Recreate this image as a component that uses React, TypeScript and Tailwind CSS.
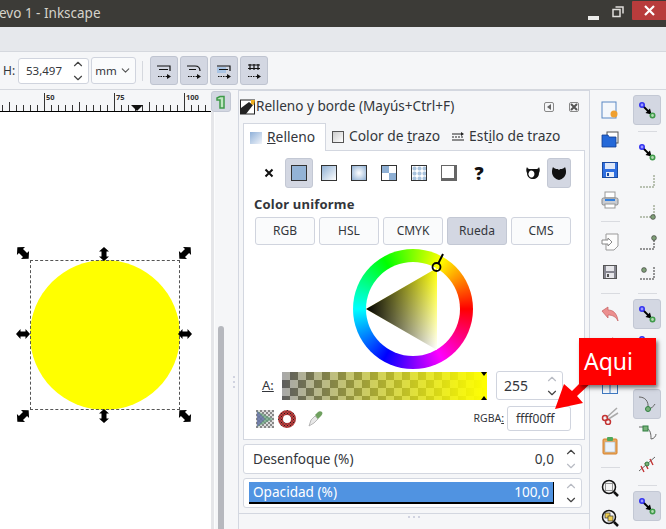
import { ChevronDown, ChevronUp } from "lucide-react";
import React from "react";

const NodeIcon = () => (
  <svg width="24" height="24" viewBox="0 0 24 24">
    <path d="M8 8L14 14" stroke="#000" strokeWidth="1.800" />
    <path d="M16.500 16.500L10.500 15L15 10.500Z" fill="#000" />
    <circle cx="7" cy="7" r="2.200" fill="#9a9aff" stroke="#3232f0" strokeWidth="1.600" />
    <circle cx="17.500" cy="17.500" r="2.200" fill="#b5dcb5" stroke="#3f9a4a" strokeWidth="1.600" />
  </svg>
);

const Handle = ({ dir, x, y, size = 14 }: { dir: number; x: number; y: number; size?: number }) => (
  <svg
    width={size}
    height={size}
    viewBox="-7 -7 14 14"
    className="absolute overflow-visible"
    style={{ left: x - size / 2, top: y - size / 2, transform: `rotate(${dir}deg)` }}
  >
    <path
      d="M0 -7 L5 -2.500 L2.500 -2.500 L2.500 2.500 L5 2.500 L0 7 L-5 2.500 L-2.500 2.500 L-2.500 -2.500 L-5 -2.500 Z"
      fill="#000"
    />
  </svg>
);

const Spin = ({ dimUp, dimDown }: { dimUp?: boolean; dimDown?: boolean }) => (
  <div className="flex flex-col items-center">
    <ChevronUp size={14} className={dimUp ? "text-[#b9bcc4]" : "text-[#444]"} />
    <ChevronDown size={14} className={dimDown ? "text-[#b9bcc4]" : "text-[#444]"} />
  </div>
);

const ToolBtn = ({ d, extra }: { d: string; extra?: React.ReactNode }) => (
  <div className="w-[28px] h-[29px] rounded-[3px] border border-[#bfc4d0] bg-[#d3d7e2] flex items-center justify-center">
    <svg width="16" height="16" viewBox="0 0 16 16">
      {extra}
      <path d={d} stroke="#111" strokeWidth="1.200" fill="none" />
      <path d="M2 13.500h9" stroke="#111" strokeWidth="1.200" strokeDasharray="1.500 1" />
      <path d="M11 11l4 2.500-4 2.500z" fill="#111" />
    </svg>
  </div>
);

const Swatch = ({ className, children }: { className: string; children?: React.ReactNode }) => (
  <div className="w-[30px] flex justify-center">
    <div className={`w-[16px] h-[16px] border border-[#333] ${className}`}>{children}</div>
  </div>
);

const ModeTab = ({ label, on }: { label: string; on?: boolean }) => (
  <div
    className={`w-[60px] h-[28px] rounded-[3px] border flex items-center justify-center text-[12px] ${
      on ? "bg-[#d3d7e2] border-[#c3c8d4]" : "bg-[#fafbfc] border-[#d0d4de]"
    }`}
  >
    {label}
  </div>
);

const Cell = ({ on, children }: { on?: boolean; children?: React.ReactNode }) => (
  <div
    className={`w-[28px] h-[30px] shrink-0 flex items-center justify-center rounded-[3px] ${
      on ? "bg-[#d3d7e2] border border-[#c3c8d4]" : ""
    }`}
  >
    {children}
  </div>
);

const Sep = () => (
  <div className="h-[12px] w-[19px] flex items-center shrink-0">
    <div className="h-px w-full bg-[#d9dbe0]" />
  </div>
);

const Guide = ({ d, dot, color = "#333" }: { d: string; dot?: [number, number]; color?: string }) => (
  <svg width="20" height="20" viewBox="0 0 20 20">
    <path d={d} stroke={color} strokeWidth="1" strokeDasharray="2 1" fill="none" />
    {dot && <circle cx={dot[0]} cy={dot[1]} r="2.400" fill="#7f9f78" stroke="#333" strokeWidth="0.600" />}
  </svg>
);

export default function App() {
  const ticks = Array.from({ length: 31 }, (_, i) => i * 7 + 2.5);

  return (
    <div className="relative w-[666px] h-[529px] overflow-hidden bg-[#f5f6f8] text-[#33363b] font-['Noto_Sans','Open_Sans',sans-serif]">
      {/* title bar */}
      <div className="h-[27px] bg-[#3c3b37] flex items-center justify-between">
        <div className="ml-[-1px] text-[13.500px] text-[#d6d3cb]">evo 1 - Inkscape</div>
        <div className="flex items-center h-full">
          <div className="w-[11px] h-[4px] bg-[#ececea] mt-[8px] mr-[13px]" />
          <svg width="12" height="12" viewBox="0 0 12 12" className="mr-[8px] mb-[3px]">
            <path d="M3.500 1h7.500v6.500" fill="none" stroke="#dfdedb" strokeWidth="1.500" />
            <rect x="1" y="3.500" width="7" height="7" fill="none" stroke="#dfdedb" strokeWidth="1.500" />
          </svg>
          <div className="w-[35px] h-[19px] mb-[6px] bg-[#b83c3c] flex items-center justify-center mr-[-1px] rounded-[1px]">
            <svg width="11" height="11" viewBox="0 0 11 11">
              <path d="M1 1l9 9M10 1l-9 9" stroke="#fff" strokeWidth="2.200" />
            </svg>
          </div>
        </div>
      </div>

      {/* menu bar */}
      <div className="h-[25px] bg-[#e6e8ec] border-b border-[#d5d8de]" />

      {/* controls bar */}
      <div className="h-[38px] flex items-center pl-[3px] border-b border-[#d5d8de]">
        <span className="text-[12px] w-[15px]">H:</span>
        <div className="w-[71px] h-[26px] rounded-[3px] border border-[#d0d4de] bg-white flex items-center justify-between pl-[7px] pr-[3px] text-[11.500px]">
          53,497
          <Spin />
        </div>
        <div className="ml-[2px] w-[45px] h-[27px] rounded-[3px] border border-[#d0d4de] bg-[#fafbfc] flex items-center justify-center gap-[2px] text-[11.500px]">
          mm
          <ChevronDown size={13} className="text-[#555]" />
        </div>
        <div className="w-px h-[20px] bg-[#d5d8de] ml-[6px] mr-[7px]" />
        <div className="flex gap-[2px]">
          <ToolBtn d="M1 3h13v5M3 6.500h9" />
          <ToolBtn d="M1 3h8c3 0 5 2 5 5M3 6.500h7" />
          <ToolBtn d="M1 3h13v5M3 6.500h9" extra={<rect x="1" y="4" width="9" height="6" fill="#a9c4e4" />} />
          <ToolBtn d="M2 2h12M2 5.500h12M4 1v6M8 1v6M12 1v6" />
        </div>
      </div>

      <div className="h-[440px] flex">
        {/* canvas column */}
        <div className="w-[211px] shrink-0 flex flex-col bg-white">
          <div className="relative h-[22px] bg-[#f5f6f8] border-b border-black">
            <svg width="211" height="21" className="absolute left-0 top-0">
              {ticks.map((x, i) => (
                <path
                  key={i}
                  d={`M${x} 21V${(i + 4) % 10 === 0 ? 3 : (i + 4) % 5 === 0 ? 12 : 15}`}
                  stroke="#333"
                  strokeWidth="1"
                />
              ))}
              <path d="M131 15h12l-6 6z" fill="#111" />
            </svg>
            <span className="absolute left-[46px] top-[2px] text-[7.500px] font-bold text-[#333]">50</span>
            <span className="absolute left-[116px] top-[2px] text-[7.500px] font-bold text-[#333]">75</span>
            <span className="absolute left-[186px] top-[2px] text-[7.500px] font-bold text-[#333]">100</span>
          </div>
          <div className="relative flex-1">
            <div className="absolute left-[30px] top-[148px] w-[150px] h-[150px] rounded-full bg-[#ffff00]" />
            <div className="absolute left-[30px] top-[148px] w-[150px] h-[150px] border border-dashed border-[#555]" />
            <Handle dir={0} x={104} y={141.5} />
            <Handle dir={0} x={104} y={303.5} />
            <Handle dir={90} x={23} y={222} />
            <Handle dir={90} x={185} y={222} />
            <Handle dir={-45} x={23} y={141} size={16} />
            <Handle dir={45} x={185} y={141} size={16} />
            <Handle dir={45} x={23} y={303.5} size={16} />
            <Handle dir={-45} x={185} y={303.5} size={16} />
          </div>
        </div>

        {/* scrollbar column */}
        <div className="w-[27px] shrink-0 flex flex-col">
          <div className="h-[22px] flex items-start">
            <div className="w-[20px] h-[21px] rounded-[3px] bg-[#d3d7e2] border border-[#c3c8d4] flex items-center justify-center mt-[1px]">
              <svg width="12" height="14" viewBox="0 0 12 14">
                <path d="M2 3l3-1.500h4V13H5V5H2z" fill="#bfe6c0" stroke="#3f9a4a" strokeWidth="1.500" />
              </svg>
            </div>
          </div>
          <div className="flex-1 flex">
            <div className="w-[3px] bg-[#e5e6e9]" />
            <div className="relative flex-1 border-l border-[#fbfcfd]">
              <div className="absolute left-[3px] top-[214px] bottom-[0] w-[6px] rounded-t-[3px] bg-[#b6b8be]" />
              <div className="absolute left-[18px] top-[264px] flex flex-col gap-[3px]">
                <div className="w-[2px] h-[2px] bg-[#d0d3e0]" />
                <div className="w-[2px] h-[2px] bg-[#d0d3e0]" />
                <div className="w-[2px] h-[2px] bg-[#d0d3e0]" />
              </div>
            </div>
          </div>
        </div>

        {/* fill and stroke dock */}
        <div className="w-[352px] shrink-0 border-l border-t border-r border-[#d3d7e0] flex flex-col">
          <div className="h-[31px] shrink-0 flex items-center pl-[1px] pr-[10px]">
            <svg width="16" height="16" viewBox="0 0 16 16" className="shrink-0">
              <rect x="0.500" y="1" width="14" height="14" fill="#fff" stroke="#222" />
              <path d="M1 15L1 9 9 3l4 3-7 9z" fill="#222" />
              <path d="M11 1l4 0-1 5-3-1z" fill="#f0b020" />
            </svg>
            <span className="text-[13.600px] whitespace-nowrap">Relleno y borde (Mayús+Ctrl+F)</span>
            <div className="ml-auto flex gap-[15px]">
              <div className="w-[10px] h-[10px] border border-[#888] rounded-[2px] flex items-center justify-center">
                <div className="w-0 h-0 border-y-[3px] border-y-transparent border-r-[4px] border-r-[#666]" />
              </div>
              <div className="w-[10px] h-[10px] border border-[#888] rounded-[2px] flex items-center justify-center text-[#555]">
                <svg width="8" height="8" viewBox="0 0 8 8">
                  <path d="M1 1l6 6M7 1l-6 6" stroke="#555" strokeWidth="2" />
                </svg>
              </div>
            </div>
          </div>

          {/* notebook */}
          <div className="ml-[4px] mr-[4px] flex flex-col">
            <div className="h-[28px] shrink-0 flex items-end text-[13.800px]">
              <div className="w-[83px] h-[28px] bg-white border border-b-0 border-[#d3d7e0] flex items-center pl-[6px] gap-[5px] relative top-px z-10">
                <div className="w-[12px] h-[12px] bg-[linear-gradient(135deg,#8fb0d8,#f2f5fa)]" />
                <span>
                  <span className="underline">R</span>elleno
                </span>
              </div>
              <div className="flex items-center h-[27px] pl-[6px] gap-[5px]">
                <div className="w-[12px] h-[12px] border border-[#555] bg-[linear-gradient(135deg,#ccc,#fff)]" />
                <span>
                  Color de <span className="underline">t</span>razo
                </span>
              </div>
              <div className="flex items-center h-[27px] pl-[12px] gap-[5px]">
                <svg width="12" height="12" viewBox="0 0 12 12">
                  <path d="M0 3h9M0 9h12" stroke="#222" />
                  <path d="M0 6h12" stroke="#222" strokeDasharray="2 1" />
                  <path d="M9 1l3 2-3 2z" fill="#222" />
                </svg>
                <span>
                  Est<span className="underline">i</span>lo de trazo
                </span>
              </div>
            </div>

            <div className="h-[290px] shrink-0 bg-white border border-[#d3d7e0] pl-[10px] pr-[12px] pt-[7px]">
              <div className="flex items-center h-[30px]">
                <div className="w-[30px] flex justify-center">
                  <svg width="10" height="10" viewBox="0 0 10 10">
                    <path d="M1.500 1.500l7 7M8.500 1.500l-7 7" stroke="#111" strokeWidth="2" />
                  </svg>
                </div>
                <div className="w-[30px] h-[30px] flex items-center justify-center">
                  <div className="w-[28px] h-[30px] flex items-center justify-center rounded-[3px] bg-[#d3d7e2] border border-[#c3c8d4]">
                    <div className="w-[16px] h-[16px] border border-[#333] bg-[#93b3d6]" />
                  </div>
                </div>
                <Swatch className="bg-[linear-gradient(135deg,#8fb0d4,#ffffff)]" />
                <Swatch className="bg-[radial-gradient(circle,#ffffff,#8fb0d4)]" />
                <Swatch className="grid grid-cols-2">
                  <div className="bg-[#8fb0d4]" />
                  <div className="bg-white" />
                  <div className="bg-white" />
                  <div className="bg-[#8fb0d4]" />
                </Swatch>
                <Swatch className="bg-[radial-gradient(circle,#a9c3dd_1.500px,#ffffff_2.500px)] bg-[length:5px_5px]" />
                <Swatch className="bg-white border-[#666] border-r-[3px] border-b-[3px]" />
                <div className="w-[30px] flex justify-center text-[18px] font-black leading-none text-[#111]">?</div>
                <div className="ml-auto flex items-center">
                  <div className="w-[28px] flex justify-center">
                    <svg width="14" height="14" viewBox="0 0 14 14">
                      <path
                        fillRule="evenodd"
                        d="M1 1c1 2 2 2 3 2h6c1 0 2 0 3-2 1 2 1 4 0 6 0 4-3 6-6 6s-6-2-6-6C0 5 0 3 1 1zM7 5a3 3.500 0 100 6 3 3.500 0 000-6z"
                        fill="#111"
                      />
                    </svg>
                  </div>
                  <div className="w-[24px] h-[30px] mr-[1px] rounded-[3px] bg-[#d3d7e2] border border-[#c3c8d4] flex items-center justify-center">
                    <svg width="14" height="14" viewBox="0 0 14 14">
                      <path d="M1 1c1 1.500 3 2 4 2 1 0 1.500.500 2 1 .500-.500 1-1 2-1 1 0 3-.500 4-2 1 2 1 4 1 5 0 4-3 7-7 8-4-1-7-4-7-8 0-1 0-3 1-5z" fill="#111" />
                    </svg>
                  </div>
                </div>
              </div>

              <div className="mt-[7px] text-[13px] font-bold leading-[18px] tracking-[0.2px]">Color uniforme</div>
              <div className="mt-[4px] ml-px flex gap-[4px]">
                <ModeTab label="RGB" />
                <ModeTab label="HSL" />
                <ModeTab label="CMYK" />
                <ModeTab label="Rueda" on />
                <ModeTab label="CMS" />
              </div>

              {/* color wheel */}
              <div className="mt-[4px] flex justify-center">
                <div className="relative w-[120px] h-[120px] rounded-full bg-[conic-gradient(from_90deg,#ff0000,#ff00ff,#0000ff,#00ffff,#00ff00,#ffff00,#ff0000)]">
                  <div className="absolute inset-[13px] rounded-full bg-white" />
                  <svg width="120" height="120" viewBox="0 0 120 120" className="absolute left-0 top-0">
                    <defs>
                      <linearGradient id="hueFade" x1="0" y1="0" x2="0" y2="1">
                        <stop offset="0" stopColor="#ffff00" />
                        <stop offset="1" stopColor="#ffffff" />
                      </linearGradient>
                      <linearGradient id="blackFade" x1="0" y1="0" x2="1" y2="0">
                        <stop offset="0" stopColor="#000" stopOpacity="1" />
                        <stop offset="1" stopColor="#000" stopOpacity="0" />
                      </linearGradient>
                    </defs>
                    <path d="M13 60L84 19V101Z" fill="url(#hueFade)" />
                    <path d="M13 60L84 19V101Z" fill="url(#blackFade)" />
                    <circle cx="83.500" cy="18" r="4" fill="none" stroke="#000" strokeWidth="1.800" />
                    <path d="M85 15L90 5" stroke="#000" strokeWidth="2" />
                  </svg>
                </div>
              </div>

              {/* alpha slider */}
              <div className="mt-[2px] flex items-center">
                <span className="w-[20px] ml-[8px] text-[13px] underline decoration-1">A:</span>
                <div className="relative w-[205px] h-[28px] bg-[linear-gradient(90deg,rgba(255,255,0,0),#ffff00),repeating-conic-gradient(#5e5e5e_0_25%,#a8a8a8_0_50%)] [background-size:100%_100%,16px_16px]">
                  <div className="absolute right-0 top-0 w-0 h-0 border-x-[3px] border-x-transparent border-t-[4px] border-t-black" />
                  <div className="absolute right-0 bottom-0 w-0 h-0 border-x-[3px] border-x-transparent border-b-[4px] border-b-black" />
                </div>
                <div className="ml-[9px] w-[67px] h-[29px] rounded-[3px] border border-[#d0d4de] flex items-center justify-between pl-[7px] pr-[3px] text-[14px]">
                  255
                  <Spin dimUp />
                </div>
              </div>

              {/* rgba row */}
              <div className="mt-[6px] flex items-center h-[25px]">
                <svg width="18" height="18" viewBox="0 0 18 18" className="ml-[2px]">
                  <defs>
                    <pattern id="chk" width="4" height="4" patternUnits="userSpaceOnUse">
                      <rect width="4" height="4" fill="#ddd" />
                      <rect width="2" height="2" fill="#888" />
                      <rect x="2" y="2" width="2" height="2" fill="#888" />
                    </pattern>
                    <pattern id="chkRed" width="3" height="3" patternUnits="userSpaceOnUse">
                      <rect width="3" height="3" fill="#c23c3c" />
                      <rect width="1" height="1" fill="#222" />
                      <rect x="1.500" y="1.500" width="1" height="1" fill="#222" />
                    </pattern>
                  </defs>
                  <rect width="18" height="18" fill="url(#chk)" />
                  <path d="M1 1L17 9 1 17z" fill="#5f9e78" opacity="0.7" />
                  <path d="M1 1L9 9 1 17z" fill="#6a62b8" opacity="0.6" />
                </svg>
                <svg width="18" height="18" viewBox="0 0 18 18" className="ml-[4px]">
                  <path
                    fillRule="evenodd"
                    d="M9 0a9 9 0 100 18 9 9 0 000-18zM9 5a4 4 0 110 8 4 4 0 010-8z"
                    fill="url(#chkRed)"
                  />
                </svg>
                <svg width="16" height="17" viewBox="0 0 16 17" className="ml-[12px]">
                  <path d="M1 16l2-6 4-4 3 3-4 4z" fill="#e8e8e8" stroke="#aaa" strokeWidth="0.800" />
                  <path d="M7 5l3-3c1-1 3-1 4 0s0 3-1 4l-3 3z" fill="#6fa05f" />
                </svg>
                <span className="ml-auto text-[10.500px]">
                  RGBA<span className="underline">:</span>
                </span>
                <div className="ml-[3px] mr-[1px] w-[64px] h-[25px] rounded-[3px] border border-[#d0d4de] flex items-center pl-[8px] text-[12px]">
                  ffff00ff
                </div>
              </div>
            </div>

            <div className="mt-[4px] h-[30px] shrink-0 mr-[3px] rounded-[3px] border border-[#d3d7e0] bg-white flex items-center pl-[9px] pr-[3px] text-[13.600px]">
              Desenfoque (%)
              <span className="ml-auto mr-[10px]">0,0</span>
              <Spin dimDown />
            </div>
            <div className="mt-[4px] h-[30px] shrink-0 mr-[3px] rounded-[3px] border border-[#d3d7e0] bg-white flex items-center pl-[5px] pr-[3px] text-[13.600px]">
              <div className="flex-1 h-[22px] bg-[#5093e1] border-b-2 border-r border-black text-white flex items-center justify-between px-[4px]">
                <span>Opacidad (%)</span>
                <span>100,0</span>
              </div>
              <div className="ml-[10px]">
                <Spin dimUp />
              </div>
            </div>
            <div className="h-[5px] shrink-0" />
          </div>
          <div className="h-[1px] bg-[#d3d7e0] shrink-0" />
          <div className="flex justify-center gap-[3px] mt-[2px]">
            <div className="w-[2px] h-[2px] bg-[#d0d3e0]" />
            <div className="w-[2px] h-[2px] bg-[#d0d3e0]" />
            <div className="w-[2px] h-[2px] bg-[#d0d3e0]" />
          </div>
        </div>

        {/* commands bar */}
        <div className="w-[38px] shrink-0 flex flex-col items-center pt-[5px] pl-[2px]">
          <Cell>
            <svg width="18" height="18" viewBox="0 0 18 18">
              <rect x="1" y="1" width="14" height="16" fill="#f4f7fb" stroke="#5a88c4" />
              <circle cx="13" cy="13" r="3.500" fill="#f0a030" />
            </svg>
          </Cell>
          <Cell>
            <svg width="18" height="18" viewBox="0 0 18 18">
              <rect x="6" y="1" width="11" height="11" fill="#fff" stroke="#555" />
              <path d="M1 4h6l1 2h7v10H1z" fill="#2468d8" stroke="#123d90" strokeWidth="0.800" />
            </svg>
          </Cell>
          <Cell>
            <svg width="16" height="16" viewBox="0 0 16 16">
              <rect x="0.500" y="0.500" width="15" height="15" fill="#2f6fe0" stroke="#1b4aa0" />
              <rect x="3" y="1" width="10" height="6" fill="#dfe8f8" />
              <rect x="4" y="10" width="8" height="5" fill="#e8eef8" />
              <rect x="5" y="11" width="2" height="3" fill="#1b4aa0" />
            </svg>
          </Cell>
          <Cell>
            <svg width="18" height="18" viewBox="0 0 18 18">
              <rect x="4" y="1" width="10" height="6" fill="#fff" stroke="#999" />
              <rect x="1" y="7" width="16" height="7" rx="1.500" fill="#c9ccd2" stroke="#888" />
              <rect x="4" y="8" width="10" height="2" fill="#2f7fe0" />
              <rect x="4" y="13" width="10" height="4" fill="#fff" stroke="#999" />
            </svg>
          </Cell>
          <Sep />
          <Cell>
            <svg width="18" height="18" viewBox="0 0 18 18">
              <path d="M5 1h12v12l-4 4H5z" fill="#fcfcfc" stroke="#999" />
              <path d="M1 7h6V5l4 4-4 4v-2H1z" fill="#fff" stroke="#888" />
            </svg>
          </Cell>
          <Cell>
            <svg width="14" height="14" viewBox="0 0 14 14">
              <rect x="0.500" y="0.500" width="13" height="13" fill="#85858f" stroke="#555" />
              <rect x="3" y="1" width="8" height="5" fill="#e6e6ea" />
              <rect x="3" y="8" width="8" height="5" fill="#e6e6ea" />
              <rect x="4" y="9" width="2" height="3" fill="#555" />
            </svg>
          </Cell>
          <Sep />
          <Cell>
            <svg width="18" height="16" viewBox="0 0 18 16">
              <path d="M1 5l6-4v3c5 0 9 3 10 11-2-4-5-6-10-6v3z" fill="#ec8f8f" stroke="#c46060" strokeWidth="0.700" />
            </svg>
          </Cell>
          <Cell>
            <svg width="18" height="16" viewBox="0 0 18 16">
              <path d="M17 5l-6-4v3C6 4 2 7 1 15c2-4 5-6 10-6v3z" fill="#ec8f8f" />
            </svg>
          </Cell>
          <Sep />
          <Cell>
            <svg width="16" height="16" viewBox="0 0 16 16">
              <rect x="0.500" y="0.500" width="15" height="15" fill="#f3f7fc" stroke="#3f78c0" />
              <path d="M8 0v16" stroke="#3f78c0" />
            </svg>
          </Cell>
          <Cell>
            <svg width="18" height="18" viewBox="0 0 18 18">
              <path d="M5 11L16 1M6 13L17 6" stroke="#aaa" strokeWidth="1.500" />
              <circle cx="4" cy="11" r="2.500" fill="none" stroke="#c43434" strokeWidth="1.500" />
              <circle cx="7" cy="15" r="2.500" fill="none" stroke="#c43434" strokeWidth="1.500" />
            </svg>
          </Cell>
          <Cell>
            <svg width="16" height="18" viewBox="0 0 16 18">
              <rect x="1" y="2" width="14" height="15" rx="1" fill="#eba95c" stroke="#d4802c" />
              <rect x="3" y="5" width="10" height="10" fill="#eaf2fb" stroke="#9ab" strokeWidth="0.500" />
              <rect x="5" y="0" width="6" height="4" rx="1" fill="#4fa85a" />
            </svg>
          </Cell>
          <Sep />
          <Cell>
            <svg width="18" height="18" viewBox="0 0 18 18">
              <circle cx="8" cy="8" r="6.500" fill="#f4f4f4" stroke="#111" strokeWidth="1.500" />
              <rect x="4.500" y="4.500" width="7" height="7" fill="none" stroke="#333" strokeDasharray="1 1" />
              <path d="M13 13l4 4" stroke="#111" strokeWidth="2.500" />
            </svg>
          </Cell>
          <Cell>
            <svg width="18" height="18" viewBox="0 0 18 18">
              <circle cx="8" cy="8" r="6.500" fill="#f4f4f4" stroke="#111" strokeWidth="1.500" />
              <rect x="4" y="4" width="5" height="5" fill="#f0d050" stroke="#333" strokeWidth="0.700" />
              <rect x="7" y="7" width="5" height="5" fill="#f0d050" stroke="#333" strokeWidth="0.700" />
              <path d="M13 13l4 4" stroke="#111" strokeWidth="2.500" />
            </svg>
          </Cell>
        </div>

        {/* snap bar */}
        <div className="w-[38px] shrink-0 flex flex-col items-center pt-[5px] px-[5px]">
          <Cell on>
            <NodeIcon />
          </Cell>
          <Sep />
          <Cell>
            <NodeIcon />
          </Cell>
          <Cell>
            <Guide d="M3 15h14V2" color="#7c8c6c" />
          </Cell>
          <Cell>
            <Guide d="M3 15h14V2" dot={[16, 15]} color="#7c8c6c" />
          </Cell>
          <Cell>
            <Guide d="M3 17h14V6" dot={[17, 6]} />
          </Cell>
          <Cell>
            <Guide d="M3 17h14V4" dot={[7, 8]} />
          </Cell>
          <Sep />
          <Cell on>
            <NodeIcon />
          </Cell>
          <Cell>
            <NodeIcon />
          </Cell>
          <Cell>
            <NodeIcon />
          </Cell>
          <Cell on>
            <svg width="20" height="20" viewBox="0 0 20 20">
              <path d="M2 3c6 0 10 4 9 12M11 15c3 0 6-3 7-5" stroke="#666" fill="none" />
              <circle cx="11" cy="15" r="2.500" fill="#79b07a" stroke="#2f7f40" />
            </svg>
          </Cell>
          <Cell>
            <svg width="20" height="20" viewBox="0 0 20 20">
              <path d="M2 3h6c6 2 6 8 6 12M14 15c3 0 5-3 5-5" stroke="#666" fill="none" />
              <rect x="6" y="2" width="5" height="5" fill="#79b07a" stroke="#2f7f40" />
            </svg>
          </Cell>
          <Cell>
            <svg width="20" height="20" viewBox="0 0 20 20">
              <path d="M2 17L18 3" stroke="#666" />
              <path d="M4 12l3 6M8 9l3 6M13 5l3 6" stroke="#c43434" strokeWidth="1.400" />
              <circle cx="10" cy="10" r="2" fill="#79b07a" stroke="#2f7f40" />
            </svg>
          </Cell>
          <Sep />
          <Cell on>
            <NodeIcon />
          </Cell>
        </div>
      </div>

      {/* annotation */}
      <svg width="120" height="60" viewBox="0 0 120 60" className="absolute left-[550px] top-[365px]">
        <path d="M36 12L22 26L14 19L5 44L33 38L27 31L42 17Z" fill="#ff0000" />
      </svg>
      <div className="absolute left-[579px] top-[338px] w-[77px] h-[47px] bg-[#ff0000] shadow-[2px_3px_4px_rgba(0,0,0,0.5)] flex items-center pl-[5px] text-[23px] text-white">
        Aqui
      </div>
    </div>
  );
}
